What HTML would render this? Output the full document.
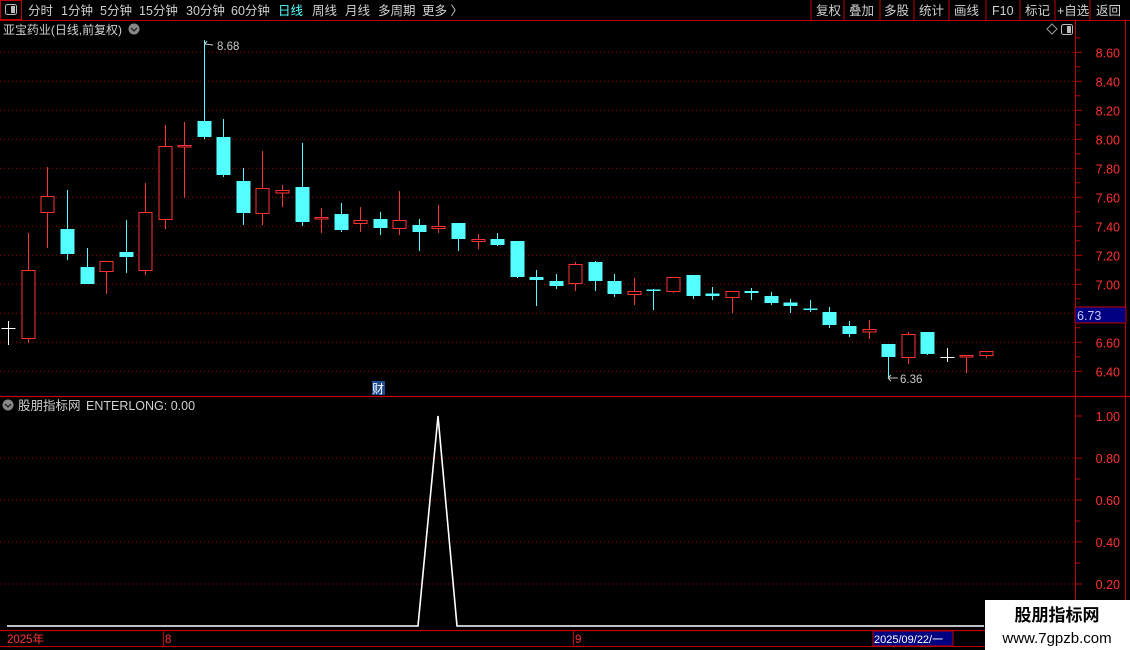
<!DOCTYPE html>
<html><head><meta charset="utf-8">
<style>
html,body{margin:0;padding:0;background:#000;width:1130px;height:650px;overflow:hidden}
svg{display:block;font-family:"Liberation Sans","Noto Sans CJK SC",sans-serif}
</style></head><body>
<svg id="s" width="1130" height="650" viewBox="0 0 1130 650" xmlns="http://www.w3.org/2000/svg">
<rect width="1130" height="650" fill="#000"/>
<line x1="0" y1="20.5" x2="1130" y2="20.5" stroke="#c00000"/>
<rect x="0.5" y="0.5" width="21" height="19" fill="none" stroke="#c00000"/>
<rect x="5.5" y="4.5" width="11" height="10" rx="2" fill="none" stroke="#bbb"/>
<rect x="11" y="6" width="4" height="7" fill="#bbb"/>
<g font-size="12.5" fill="#d0d0d0">
<text x="28" y="15">分时</text><text x="61" y="15">1分钟</text><text x="100" y="15">5分钟</text>
<text x="139" y="15">15分钟</text><text x="186" y="15">30分钟</text><text x="231" y="15">60分钟</text>
<text x="278" y="15" fill="#54ffff">日线</text><text x="312" y="15">周线</text><text x="345" y="15">月线</text>
<text x="378" y="15">多周期</text><text x="422" y="15">更多 〉</text>
<text x="816" y="15">复权</text><text x="849" y="15">叠加</text><text x="884" y="15">多股</text>
<text x="919" y="15">统计</text><text x="954" y="15">画线</text><text x="992" y="15">F10</text>
<text x="1025" y="15">标记</text><text x="1057" y="15">+自选</text><text x="1096" y="15">返回</text>
</g>
<g stroke="#c00000"><line x1="811" y1="0" x2="811" y2="20"/><line x1="844" y1="0" x2="844" y2="20"/><line x1="880" y1="0" x2="880" y2="20"/><line x1="914" y1="0" x2="914" y2="20"/><line x1="949" y1="0" x2="949" y2="20"/><line x1="986" y1="0" x2="986" y2="20"/><line x1="1020" y1="0" x2="1020" y2="20"/><line x1="1055" y1="0" x2="1055" y2="20"/><line x1="1090" y1="0" x2="1090" y2="20"/></g>
<text x="3" y="34" font-size="12" fill="#d0d0d0" textLength="119" lengthAdjust="spacingAndGlyphs">亚宝药业(日线,前复权)</text>
<circle cx="134" cy="29" r="5.5" fill="#888"/><path d="M131 28 L134 31 L137 28" stroke="#222" stroke-width="1.3" fill="none"/>
<path d="M1047 29 L1052 24 L1057 29 L1052 34Z" fill="none" stroke="#999"/>
<rect x="1061.5" y="24.5" width="11" height="10" rx="2" fill="none" stroke="#bbb"/><rect x="1067" y="26" width="4" height="7" fill="#bbb"/>
<line x1="1075.5" y1="21" x2="1075.5" y2="630" stroke="#c00000"/>
<line x1="1125.5" y1="21" x2="1125.5" y2="630" stroke="#c00000"/>
<line x1="0" y1="396.5" x2="1130" y2="396.5" stroke="#c00000" stroke-width="1.2"/>
<g id="grid"></g>
<g font-size="12.5" fill="#ff3232" text-anchor="end" id="axl"></g>
<rect x="1075" y="307" width="51" height="16" fill="#000080" stroke="#c00000"/>
<text x="1077" y="320" font-size="12.5" fill="#c8c8ff">6.73</text>
<g id="c"></g>
<text x="217" y="50" font-size="11.5" fill="#c8c8c8">8.68</text>
<path d="M205 44 L207 41 M205 44 L213 45 M205 44 L205 42" stroke="#c8c8c8" fill="none"/>
<text x="900" y="383" font-size="11.5" fill="#c8c8c8">6.36</text>
<path d="M888 378 L898 378 M888 378 L891 375 M888 378 L891 381" stroke="#c8c8c8" fill="none"/>
<rect x="372" y="381" width="13" height="14" fill="#1e4a90"/>
<text x="372" y="393" font-size="12" fill="#fff">财</text>
<circle cx="8" cy="405" r="5.5" fill="#888"/><path d="M5 404 L8 407 L11 404" stroke="#222" stroke-width="1.3" fill="none"/>
<text x="18" y="410" font-size="12.5" fill="#d0d0d0">股朋指标网 <tspan dx="2">ENTERLONG: 0.00</tspan></text>
<polyline points="7,626 418,626 438,416 457,626 984,626" fill="none" stroke="#fff" stroke-width="1.6"/>
<line x1="0" y1="630.5" x2="985" y2="630.5" stroke="#c00000" stroke-width="1.2"/>
<line x1="0" y1="646.5" x2="985" y2="646.5" stroke="#c00000"/>
<line x1="163.5" y1="630" x2="163.5" y2="646" stroke="#c00000"/>
<line x1="573.5" y1="630" x2="573.5" y2="646" stroke="#c00000"/>
<g font-size="11.5" fill="#ff3232"><text x="7" y="643">2025年</text><text x="165" y="643">8</text><text x="575" y="643">9</text></g>
<rect x="873" y="631" width="80" height="15" fill="#000080" stroke="#c00000"/>
<text x="874" y="643" font-size="11" fill="#fff">2025/09/22/一</text>
<rect x="985" y="600" width="145" height="50" fill="#fff"/>
<text x="1057" y="621" font-size="17" font-weight="bold" fill="#000" text-anchor="middle">股朋指标网</text>
<text x="1057" y="643" font-size="15" fill="#000" text-anchor="middle">www.7gpzb.com</text>
</svg>
<script>
var NS="http://www.w3.org/2000/svg",g=document.getElementById('c'),gr=document.getElementById('grid'),ax=document.getElementById('axl');
function el(p,t,a){var e=document.createElementNS(NS,t);for(var k in a)e.setAttribute(k,a[k]);p.appendChild(e);return e;}
for(var i=0;i<12;i++){var p=6.4+i*0.2,y=371.3-(p-6.4)*145;if(y<45)break;
el(gr,'line',{x1:0,y1:y,x2:1075,y2:y,stroke:'#a00000','stroke-dasharray':'1 3'});
el(gr,'line',{x1:1076,y1:y,x2:1082,y2:y,stroke:'#c00000'});
el(gr,'line',{x1:1076,y1:y-14.5,x2:1080,y2:y-14.5,stroke:'#c00000'});
var t=el(ax,'text',{x:1120,y:y+5});t.textContent=p.toFixed(2);}
for(var i=1;i<=4;i++){var v=i*0.2,y=416+(1-v)*210;
el(gr,'line',{x1:0,y1:y,x2:1075,y2:y,stroke:'#a00000','stroke-dasharray':'1 3'});
el(gr,'line',{x1:1076,y1:y,x2:1082,y2:y,stroke:'#c00000'});
el(gr,'line',{x1:1076,y1:y+21,x2:1080,y2:y+21,stroke:'#c00000'});
var t=el(ax,'text',{x:1120,y:y+5});t.textContent=v.toFixed(2);}
el(gr,'line',{x1:1076,y1:416,x2:1082,y2:416,stroke:'#c00000'});
var t=el(ax,'text',{x:1120,y:421});t.textContent='1.00';
var C=[['w',328,329,321,345],['r',270,339,233,343],['r',196,213,167,248],['c',229,254,190,260],['c',267,284,248,284],['r',261,272,261,294],['c',252,257,220,273],['r',212,271,183,275],['r',146,220,125,229],['r',145,147.5,122,198],['c',121,137,40,139],['c',137,175,119,177],['c',181,213,168,225],['r',188,214,151,225],['r',190,193.5,185,207],['c',187,222,143,226],['r',217,219.5,208,233],['c',214,230,203,232],['r',220,224,207,232],['c',219,228,212,235],['r',220,229,191,235],['c',225,232,219,251],['r',226,229,205,233],['c',223,239,223,251],['r',239,242,234,249],['c',239,245,233,246],['c',241,277,241,278],['c',277,280,270,306],['c',281,286,274,289],['r',264,284,262,291],['c',262,281,261,291],['c',281,294,274,297],['r',291,295,278,305],['c',289.5,291,289,310],['r',277,292,277,293],['c',275,296,275,299],['c',293.5,296,287,300],['r',291,298,291,313],['c',291,293,288,300],['c',296,303,292,305],['c',302.5,306,299,313],['c',308.5,310,300,312],['c',312,325,307,328],['c',326,334,321,337],['r',329,332.5,320,339],['c',344,357,344,377],['r',334,358,332,364],['c',332,354,332,355],['w',357,358,348,362],['r',355,357.5,355,373],['r',351,356,351,358]];
var col={r:'#ff3232',c:'#54ffff',w:'#ffffff'};
C.forEach(function(d,i){var x=Math.round(8.3+19.55*i)+0.5,c=col[d[0]],w=14;
el(g,'line',{x1:x,y1:d[3],x2:x,y2:d[4],stroke:c});
var h=d[2]-d[1];
if(d[0]=='r'){ if(h<2.5){el(g,'rect',{x:x-w/2,y:d[1],width:w,height:Math.max(h,2),fill:c});}
 else{el(g,'rect',{x:x-w/2+0.5,y:d[1]+0.5,width:w-1,height:h-1,fill:'#000',stroke:c});}}
else if(d[0]=='w'){el(g,'line',{x1:x-7,y1:d[1]+0.5,x2:x+7,y2:d[1]+0.5,stroke:c});}
else{el(g,'rect',{x:x-w/2,y:d[1],width:w,height:Math.max(h,1.5),fill:c});}
});
</script>
</body></html>
